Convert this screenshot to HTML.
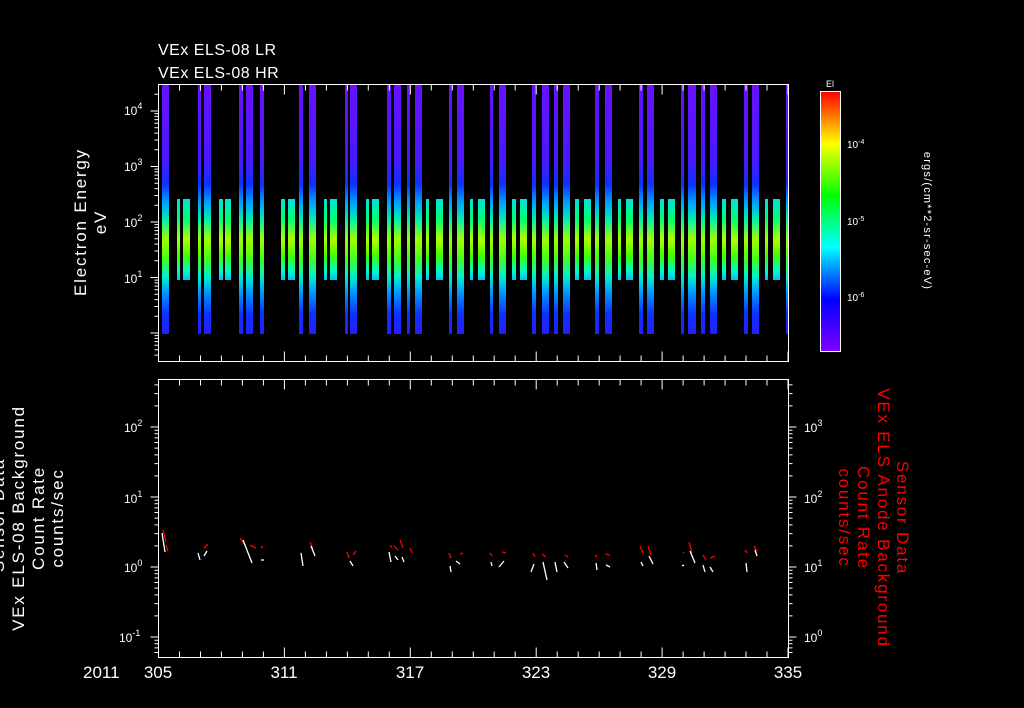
<!DOCTYPE html>
<html><head><meta charset="utf-8">
<style>
html,body{margin:0;padding:0;background:#000;width:1024px;height:708px;overflow:hidden}
svg{display:block}
text{font-family:"Liberation Sans",sans-serif;fill:#fff}
</style></head>
<body>
<svg id="s" width="1024" height="708" viewBox="0 0 1024 708" xmlns="http://www.w3.org/2000/svg">
<defs>
<linearGradient id="gf" x1="0" y1="0" x2="0" y2="1">
<stop offset="0" stop-color="#6a10ff"/>
<stop offset="0.3" stop-color="#4a18ff"/>
<stop offset="0.4" stop-color="#1030ff"/>
<stop offset="0.47" stop-color="#00a0ff"/>
<stop offset="0.54" stop-color="#00f0b0"/>
<stop offset="0.62" stop-color="#a0ff00"/>
<stop offset="0.7" stop-color="#40ff20"/>
<stop offset="0.77" stop-color="#00f0d0"/>
<stop offset="0.84" stop-color="#0090ff"/>
<stop offset="0.92" stop-color="#1030ff"/>
<stop offset="1" stop-color="#2020ff"/>
</linearGradient>
<linearGradient id="gs" x1="0" y1="0" x2="0" y2="1">
<stop offset="0" stop-color="#00e0e0"/>
<stop offset="0.25" stop-color="#00ff70"/>
<stop offset="0.5" stop-color="#b0ff00"/>
<stop offset="0.7" stop-color="#40ff00"/>
<stop offset="0.88" stop-color="#00ffc0"/>
<stop offset="1" stop-color="#00c0ff"/>
</linearGradient>
<linearGradient id="gc" x1="0" y1="0" x2="0" y2="1">
<stop offset="0" stop-color="#ff0000"/>
<stop offset="0.2" stop-color="#ffff00"/>
<stop offset="0.4" stop-color="#00ff00"/>
<stop offset="0.6" stop-color="#00ffff"/>
<stop offset="0.8" stop-color="#0000ff"/>
<stop offset="1" stop-color="#8000ff"/>
</linearGradient>
</defs>
<g id="bars"></g>
<g id="ticks" stroke="#fff" stroke-width="1" fill="none"></g>
<rect x="158.5" y="84.5" width="630" height="277" fill="none" stroke="#fff"/>
<rect x="158.5" y="379.5" width="630" height="278" fill="none" stroke="#fff"/>
<rect x="820.5" y="91.5" width="20" height="260" fill="url(#gc)" stroke="#fff"/>
<g id="pts" stroke-width="1.3" fill="none"></g>

<text x="158" y="55" font-size="16" letter-spacing="0.5">VEx ELS-08 LR</text>
<text x="158" y="78" font-size="16" letter-spacing="0.5">VEx ELS-08 HR</text>
<text x="826" y="87" font-size="9">El</text>

<g font-size="12">
<text x="124" y="115">10<tspan font-size="9" dy="-6">4</tspan></text>
<text x="124" y="171">10<tspan font-size="9" dy="-6">3</tspan></text>
<text x="124" y="227">10<tspan font-size="9" dy="-6">2</tspan></text>
<text x="124" y="283">10<tspan font-size="9" dy="-6">1</tspan></text>
<text x="124" y="432">10<tspan font-size="9" dy="-6">2</tspan></text>
<text x="124" y="503">10<tspan font-size="9" dy="-6">1</tspan></text>
<text x="124" y="572">10<tspan font-size="9" dy="-6">0</tspan></text>
<text x="119" y="642">10<tspan font-size="9" dy="-6">-1</tspan></text>
<text x="804" y="432">10<tspan font-size="9" dy="-6">3</tspan></text>
<text x="804" y="503">10<tspan font-size="9" dy="-6">2</tspan></text>
<text x="804" y="572">10<tspan font-size="9" dy="-6">1</tspan></text>
<text x="804" y="642">10<tspan font-size="9" dy="-6">0</tspan></text>
</g>
<g font-size="10">
<text x="847" y="148">10<tspan font-size="7" dy="-4">-4</tspan></text>
<text x="847" y="225">10<tspan font-size="7" dy="-4">-5</tspan></text>
<text x="847" y="301">10<tspan font-size="7" dy="-4">-6</tspan></text>
</g>
<text font-size="11" letter-spacing="1.2" transform="translate(924,221) rotate(90)" text-anchor="middle">ergs/(cm**2-sr-sec-eV)</text>

<g font-size="17">
<text x="83" y="678">2011</text>
<text x="158" y="678" text-anchor="middle">305</text>
<text x="284" y="678" text-anchor="middle">311</text>
<text x="410" y="678" text-anchor="middle">317</text>
<text x="536" y="678" text-anchor="middle">323</text>
<text x="662" y="678" text-anchor="middle">329</text>
<text x="788" y="678" text-anchor="middle">335</text>
</g>

<g font-size="17" text-anchor="middle" letter-spacing="1.8">
<text transform="translate(86,222) rotate(-90)">Electron Energy</text>
<text transform="translate(106,222) rotate(-90)">eV</text>
<text transform="translate(4,515) rotate(-90)">Sensor Data</text>
<text transform="translate(24,518) rotate(-90)">VEx ELS-08 Background</text>
<text transform="translate(44,518) rotate(-90)">Count Rate</text>
<text transform="translate(63,518) rotate(-90)">counts/sec</text>
</g>
<g font-size="17" text-anchor="middle" letter-spacing="1.8">
<text transform="translate(897,518) rotate(90)" style="fill:#ff0000">Sensor Data</text>
<text transform="translate(878,518) rotate(90)" style="fill:#ff0000">VEx ELS Anode Background</text>
<text transform="translate(858,518) rotate(90)" style="fill:#ff0000">Count Rate</text>
<text transform="translate(839,518) rotate(90)" style="fill:#ff0000">counts/sec</text>
</g>
</svg>
<script>
var NS="http://www.w3.org/2000/svg";
function el(p,t,a){var e=document.createElementNS(NS,t);for(var k in a)e.setAttribute(k,a[k]);p.appendChild(e);return e;}
var bars=document.getElementById('bars');
var full=[[162,169],[198,201],[204,211],[239,243],[246,253],[260,264],[299,303],[309,316],[345,348],[350,357],[387,391],[394,401],[407,410],[415,422],[449,452],[457,464],[490,493],[499,506],[532,536],[542,549],[554,558],[563,570],[595,599],[605,612],[639,643],[647,654],[681,684],[688,696],[701,705],[710,717],[744,748],[752,759],[786,788]];
var shrt=[[177,180],[183,190],[219,223],[225,231],[281,285],[288,295],[324,327],[330,337],[366,369],[372,379],[426,429],[436,443],[470,473],[478,485],[512,516],[520,527],[575,579],[584,591],[618,621],[626,633],[660,664],[668,675],[722,726],[731,738],[765,768],[773,780]];
full.forEach(function(b){el(bars,'rect',{x:b[0],y:85,width:b[1]-b[0],height:249,fill:'url(#gf)'});});
shrt.forEach(function(b){el(bars,'rect',{x:b[0],y:199,width:b[1]-b[0],height:81,fill:'url(#gs)'});});
var t=document.getElementById('ticks'),d='';
var x0=158.5,dx=629.5/30;
for(var i=0;i<=30;i++){var x=(x0+i*dx).toFixed(1);var L=(i%6==0)?10:6;
 d+='M'+x+' 84.5v'+L+'M'+x+' 361.5v-'+L+'M'+x+' 379.5v'+L+'M'+x+' 657.5v-'+L;}
var lg=[0,0.301,0.477,0.602,0.699,0.778,0.845,0.903,0.954];
function yax(base,sp,top,bot,xa,dir){
 for(var k=-1;k<8;k++){for(var m=0;m<9;m++){var y=base-k*sp-lg[m]*sp;if(y<top||y>bot)continue;var L=m==0?8:4;d+='M'+xa+' '+y.toFixed(1)+'h'+(dir*L);}}}
yax(333,55.5,85,361,158.5,-1);
yax(637,70,380,657,158.5,-1);
yax(637,70,380,657,788.5,1);
for(var k=-1;k<3;k++){for(var m=0;m<9;m++){var y=297-k*77-lg[m]*77;if(y<92||y>351)continue;d+='M840.5 '+y.toFixed(1)+'h'+(m==0?-8:-5);}}
el(t,'path',{d:d});
var pts=document.getElementById('pts');
var segs=[[162,533,165,552,'#fff'],[163,530,166,542,'red'],[166,545,168,551,'red'],[198,553,200,560,'#fff'],[204,548,208,544,'red'],[204,556,207,551,'#fff'],[240,538,245,545,'red'],[243,540,252,563,'#fff'],[250,545,256,548,'red'],[261,548,263,546,'red'],[261,560,264,560,'#fff'],[301,553,303,566,'#fff'],[310,542,313,549,'red'],[311,546,315,556,'#fff'],[347,552,349,558,'red'],[350,561,353,566,'#fff'],[353,555,356,551,'red'],[390,545,392,548,'red'],[389,552,391,562,'#fff'],[394,546,398,550,'red'],[395,556,398,560,'#fff'],[400,540,403,548,'red'],[402,557,404,562,'#fff'],[410,548,412,553,'red'],[449,553,451,558,'red'],[450,566,451,572,'#fff'],[456,561,460,564,'#fff'],[460,554,463,553,'red'],[490,553,492,556,'red'],[491,562,492,566,'#fff'],[499,567,504,561,'#fff'],[502,552,506,553,'red'],[533,553,535,557,'red'],[534,564,531,572,'#fff'],[542,554,546,557,'red'],[543,562,547,580,'#fff'],[555,562,557,572,'#fff'],[565,555,568,557,'red'],[564,562,568,568,'#fff'],[595,555,597,557,'red'],[596,563,597,570,'#fff'],[605,554,610,555,'red'],[606,565,610,567,'#fff'],[640,546,643,553,'red'],[641,562,643,566,'#fff'],[648,546,651,555,'red'],[649,556,653,564,'#fff'],[683,552,684,553,'red'],[682,566,684,565,'#fff'],[689,542,692,553,'red'],[690,551,695,563,'#fff'],[703,555,706,560,'red'],[703,565,705,572,'#fff'],[710,558,715,556,'red'],[710,567,713,572,'#fff'],[745,550,747,553,'red'],[746,563,747,572,'#fff'],[754,546,757,551,'red'],[755,550,757,556,'#fff']];
segs.forEach(function(s){el(pts,'line',{x1:s[0],y1:s[1],x2:s[2],y2:s[3],stroke:s[4]});});
</script>
</body></html>
